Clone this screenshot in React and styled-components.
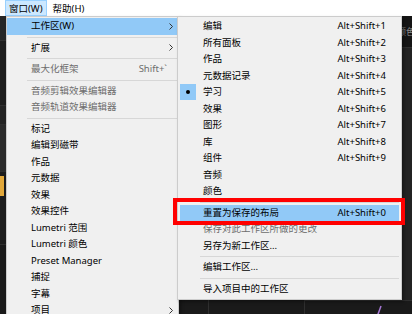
import React from 'react';
import styled, { createGlobalStyle } from 'styled-components';

const GlobalStyle = createGlobalStyle`
  html, body {
    margin: 0;
    padding: 0;
    width: 412px;
    height: 314px;
    overflow: hidden;
    background: #1e1e1e;
  }
  body {
    font-family: "Noto Sans", "Noto Sans CJK SC", sans-serif;
  }
`;

const Screen = styled.div`
  position: relative;
  width: 412px;
  height: 314px;
  display: flex;
  flex-direction: column;
  overflow: hidden;
`;

const MenuBar = styled.div`
  height: 16px;
  flex: none;
  background: #fff;
  display: flex;
  align-items: stretch;
  gap: 2px;
  padding-left: 5px;
  font-size: 9.5px;
  color: #000;
`;

const BarItem = styled.div`
  display: flex;
  align-items: center;
  padding: 0 3px;
  box-sizing: border-box;
  background: ${p => (p.$open ? '#cce8ff' : 'transparent')};
  border: 1px solid ${p => (p.$open ? '#99d1ff' : 'transparent')};
`;

const Workspace = styled.div`
  flex: 1;
  display: flex;
  background: #1e1e1e;
`;

const Dock = styled.div`
  width: ${p => (p.$w ? `${p.$w}px` : 'auto')};
  flex: ${p => (p.$w ? 'none' : 1)};
  display: flex;
  flex-direction: column;
  border-right: 1px solid #2f2f2f;
`;

const Panel = styled.div`
  height: ${p => (p.$h ? `${p.$h}px` : 'auto')};
  flex: ${p => (p.$h ? 'none' : 1)};
  background: ${p => p.$bg || '#1e1e1e'};
  border-bottom: 1px solid #2f2f2f;
  display: flex;
  align-items: ${p => p.$align || 'flex-start'};
  justify-content: ${p => p.$justify || 'flex-start'};
  color: #8c8c8c;
  font-size: 9px;
  overflow: hidden;
`;

const Clip = styled.div`
  width: 4px;
  height: 20px;
  margin-top: 4px;
  background: #e2a83a;
`;

const HeaderLabel = styled.span`
  margin-left: 92px;
  white-space: nowrap;
`;

const Menu = styled.div`
  position: absolute;
  left: ${p => p.$left}px;
  top: 16px;
  width: ${p => p.$width}px;
  box-sizing: border-box;
  background: #f0f0f0;
  border: 1px solid #cccccc;
  padding: 1px ${p => p.$padR}px 2px ${p => p.$padL}px;
  box-shadow: 2px 2px 3px rgba(0, 0, 0, 0.35);
  font-size: 9.5px;
`;

const Row = styled.div`
  display: grid;
  grid-template-columns: ${p => p.$lead}px 1fr auto ${p => p.$tail}px;
  align-items: center;
  height: 16.5px;
  background: ${p => (p.$active ? '#91c9f7' : 'transparent')};
  color: ${p => (p.$disabled ? '#6d6d6d' : '#000')};
  white-space: nowrap;
`;

const Label = styled.span`
  line-height: 16.5px;
`;

const Shortcut = styled.span`
  line-height: 16.5px;
`;

const Arrow = styled.span`
  display: flex;
  align-items: center;
  padding-left: 2px;
`;

const Check = styled.span`
  width: 16px;
  height: 16px;
  background: #91c9f7;
  display: flex;
  align-items: center;
  justify-content: center;
  &::after {
    content: '';
    width: 4px;
    height: 4px;
    border-radius: 50%;
    background: #000;
  }
`;

const Separator = styled.div`
  height: 5px;
  display: flex;
  align-items: center;
  padding-left: ${p => p.$inset}px;
  &::after {
    content: '';
    flex: 1;
    height: 1px;
    background: #d7d7d7;
  }
`;

const Callout = styled.div`
  position: absolute;
  left: 173px;
  top: 198px;
  width: 232px;
  height: 27px;
  box-sizing: border-box;
  border: 4px solid #ff0000;
  pointer-events: none;
`;

const Chevron = () => (
  <svg width="4" height="7" viewBox="0 0 4 7">
    <path d="M0.5 0.5 L3.5 3.5 L0.5 6.5" fill="none" stroke="#333" strokeWidth="1" />
  </svg>
);

const windowMenu = [
  { label: '工作区(W)', active: true, sub: true },
  { sep: true },
  { label: '扩展', sub: true },
  { sep: true },
  { label: '最大化框架', key: 'Shift+`', disabled: true },
  { sep: true },
  { label: '音频剪辑效果编辑器', disabled: true },
  { label: '音频轨道效果编辑器', disabled: true },
  { sep: true },
  { label: '标记' },
  { label: '编辑到磁带' },
  { label: '作品' },
  { label: '元数据' },
  { label: '效果' },
  { label: '效果控件' },
  { label: 'Lumetri 范围' },
  { label: 'Lumetri 颜色' },
  { label: 'Preset Manager' },
  { label: '捕捉' },
  { label: '字幕' },
  { label: '项目', sub: true },
];

const workspaceMenu = [
  { label: '编辑', key: 'Alt+Shift+1' },
  { label: '所有面板', key: 'Alt+Shift+2' },
  { label: '作品', key: 'Alt+Shift+3' },
  { label: '元数据记录', key: 'Alt+Shift+4' },
  { label: '学习', key: 'Alt+Shift+5', checked: true },
  { label: '效果', key: 'Alt+Shift+6' },
  { label: '图形', key: 'Alt+Shift+7' },
  { label: '库', key: 'Alt+Shift+8' },
  { label: '组件', key: 'Alt+Shift+9' },
  { label: '音频' },
  { label: '颜色' },
  { sep: true },
  { label: '重置为保存的布局', key: 'Alt+Shift+0', active: true },
  { label: '保存对此工作区所做的更改', disabled: true },
  { label: '另存为新工作区...' },
  { sep: true },
  { label: '编辑工作区...' },
  { sep: true },
  { label: '导入项目中的工作区' },
];

function MenuList({ items, lead, tail }) {
  return items.map((it, i) =>
    it.sep ? (
      <Separator key={i} $inset={20} />
    ) : (
      <Row key={i} $lead={lead} $tail={tail} $active={it.active} $disabled={it.disabled}>
        <span>{it.checked && <Check />}</span>
        <Label>{it.label}</Label>
        <Shortcut>{it.key}</Shortcut>
        <Arrow>{it.sub && <Chevron />}</Arrow>
      </Row>
    )
  );
}

export default function App() {
  return (
    <Screen>
      <GlobalStyle />
      <MenuBar>
        <BarItem $open>窗口(W)</BarItem>
        <BarItem>帮助(H)</BarItem>
      </MenuBar>

      <Workspace>
        <Dock $w={208}>
          <Panel $h={24} $bg="#262626" />
          <Panel $h={64} $bg="#1d1d1d" />
          <Panel $h={18} $bg="#232323" />
          <Panel $h={46} $bg="#2b2b2b" />
          <Panel $h={72} $bg="#1d1d1d">
            <Clip />
          </Panel>
          <Panel $bg="#1a1a1a" />
        </Dock>
        <Dock $w={95}>
          <Panel $h={283} $bg="#232323" />
          <Panel $bg="#1a1a1a" />
        </Dock>
        <Dock>
          <Panel $h={31} $bg="#151515" $align="center">
            <HeaderLabel>颜色</HeaderLabel>
          </Panel>
          <Panel $h={252} $bg="#232323" />
          <Panel $bg="#1a1a1a" $justify="flex-end">
            <svg width="40" height="16" viewBox="0 0 40 16">
              <path d="M2 16 L6 5" stroke="#a779d6" strokeWidth="1.5" fill="none" />
            </svg>
          </Panel>
        </Dock>
      </Workspace>

      <Menu $left={6} $width={173} $padL={0} $padR={1}>
        <MenuList items={windowMenu} lead={24} tail={10} />
      </Menu>

      <Menu $left={177} $width={225} $padL={2} $padR={2}>
        <MenuList items={workspaceMenu} lead={23} tail={13} />
      </Menu>

      <Callout />
    </Screen>
  );
}
